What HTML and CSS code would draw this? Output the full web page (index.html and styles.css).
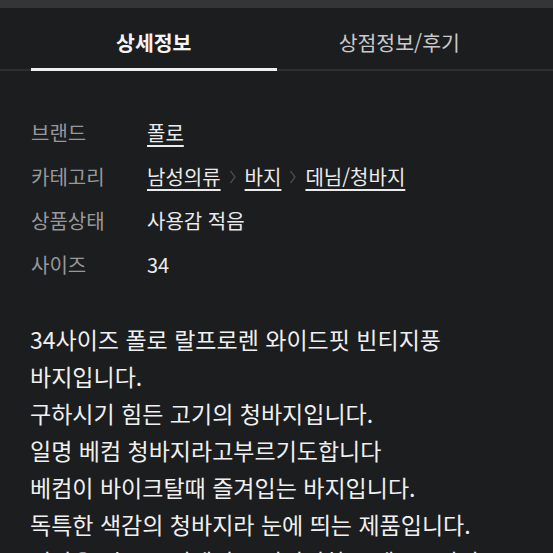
FILE: index.html
```html
<!DOCTYPE html>
<html lang="ko">
<head>
<meta charset="utf-8">
<link rel="stylesheet" href="styles.css">
</head>
<body>
<div class="topbar"></div>
<nav class="tabs">
  <div class="tab active">상세정보</div>
  <div class="tab">상점정보/후기</div>
</nav>
<section class="specs">
  <div class="row"><span class="label">브랜드</span><span class="value"><a class="link">폴로</a></span></div>
  <div class="row"><span class="label">카테고리</span><span class="value"><a class="link">남성의류</a><svg class="sep" viewBox="0 0 8 14" width="8" height="14"><path d="M1.5 1 L6 7 L1.5 13" fill="none" stroke="#4a4b4d" stroke-width="1.3"/></svg><a class="link">바지</a><svg class="sep" viewBox="0 0 8 14" width="8" height="14"><path d="M1.5 1 L6 7 L1.5 13" fill="none" stroke="#4a4b4d" stroke-width="1.3"/></svg><a class="link">데님/청바지</a></span></div>
  <div class="row"><span class="label">상품상태</span><span class="value">사용감 적음</span></div>
  <div class="row"><span class="label">사이즈</span><span class="value">34</span></div>
</section>
<section class="desc">
  <p>34사이즈 폴로 랄프로렌 와이드핏 빈티지풍<br>바지입니다.<br>구하시기 힘든 고기의 청바지입니다.<br>일명 베컴 청바지라고부르기도합니다<br>베컴이 바이크탈때 즐겨입는 바지입니다.<br>독특한 색감의 청바지라 눈에 띄는 제품입니다.<br>밑단은 길으로 리메이크 되어있하고 제보드있어요</p>
</section>
</body>
</html>
```

FILE: styles.css
```css
html, body {
  margin: 0;
  padding: 0;
  background: #1c1d1f;
  font-family: "Noto Sans CJK KR", "Noto Sans", sans-serif;
  overflow: hidden;
}
.topbar {
  height: 8px;
  background: #343537;
}
.tabs {
  display: grid;
  grid-template-columns: 1fr 1fr;
  padding: 0 31px;
  border-bottom: 2px solid #2e2f31;
}
.tab {
  height: 61px;
  box-sizing: border-box;
  padding-top: 20px;
  text-align: center;
  font-size: 20.5px;
  line-height: 28px;
  color: #c9c9cb;
}
.tab.active {
  color: #f4f4f4;
  font-weight: 700;
  height: 63px;
  border-bottom: 3px solid #efefef;
  margin-bottom: -2px;
}
.specs {
  margin-top: 40px;
  padding: 0 31px;
}
.row {
  display: grid;
  grid-template-columns: 116px 1fr;
  height: 44px;
  line-height: 44px;
  font-size: 20px;
}
.label {
  color: #98989a;
}
.value {
  color: #ebebeb;
  display: flex;
  align-items: center;
}
.link {
  color: #ebebeb;
  text-decoration: underline;
  text-decoration-thickness: 2px;
  text-underline-offset: 4px;
}
.sep {
  margin: 0 8px 0 8px;
}
.desc {
  margin-top: 34px;
  padding: 0 30px;
}
.desc p {
  margin: 0;
  font-size: 23px;
  line-height: 37px;
  color: #f0f0f0;
}
```
